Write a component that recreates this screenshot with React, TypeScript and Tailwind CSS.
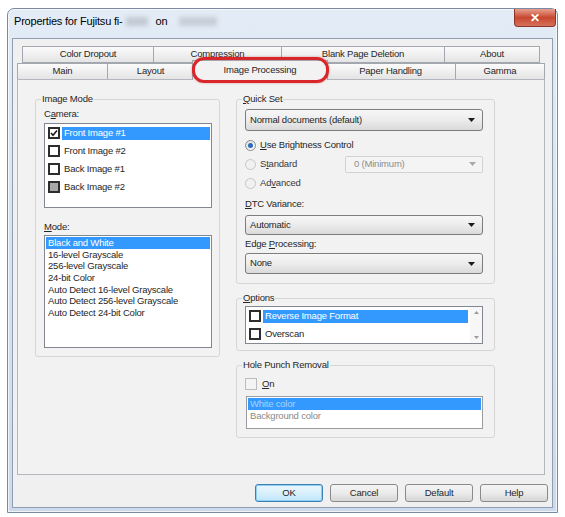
import React from 'react';

type BoxState = 'on' | 'off' | 'mixed' | 'disabled';

const Check = ({ state }: { state: BoxState }) => {
  if (state === 'disabled') {
    return <span className="w-[12px] h-[12px] shrink-0 border border-[#bcbcbc] bg-[#f4f4f4]" />;
  }
  return (
    <span className="w-[12px] h-[12px] shrink-0 border-2 border-[#2d2d2d] bg-white flex items-center justify-center">
      {state === 'on' && (
        <svg width="8" height="8" viewBox="0 0 8 8">
          <path d="M1 4 L3 6.2 L7 1.5" stroke="#1a1a1a" strokeWidth="1.6" fill="none" />
        </svg>
      )}
      {state === 'mixed' && <span className="w-[8px] h-[8px] bg-[#a8a8a8]" />}
    </span>
  );
};

const Radio = ({ on, disabled }: { on?: boolean; disabled?: boolean }) => (
  <span
    className={
      disabled
        ? 'w-[11px] h-[11px] shrink-0 rounded-full border border-[#c6c6c6] bg-[#f1f1f1]'
        : 'w-[11px] h-[11px] shrink-0 rounded-full border border-[#8b8b8b] bg-gradient-to-br from-[#dcdcdc] to-white flex items-center justify-center'
    }
  >
    {on && <span className="w-[5px] h-[5px] rounded-full bg-[#2c6bbf]" />}
  </span>
);

const Arrow = ({ light }: { light?: boolean }) => (
  <svg width="7" height="4" viewBox="0 0 7 4">
    <path d="M0 0 L7 0 L3.5 4 Z" fill={light ? '#a8a8a8' : '#1a1a1a'} />
  </svg>
);

const Dropdown = ({ text, h }: { text: string; h: string }) => (
  <div
    className={`${h} w-[238px] flex items-center justify-between pl-[4px] pr-[7px] rounded-[3px] border border-[#7d7d7d] bg-gradient-to-b from-[#f7f7f7] via-[#ececec] to-[#dadada]`}
  >
    <span>{text}</span>
    <Arrow />
  </div>
);

const Legend = ({ children }: { children: React.ReactNode }) => (
  <legend className="-ml-[3px] px-[1px] leading-[12px]">{children}</legend>
);

const Tab = ({ label, w, selected }: { label: string; w: string; selected?: boolean }) =>
  selected ? (
    <div
      className={`${w} relative z-10 -mx-[2px] -mt-[2px] h-[20px] flex items-center justify-center border border-b-0 border-[#a3a7ae] bg-[#f2f2f2]`}
    >
      <span className="-mt-[1px]">{label}</span>
      <div className="absolute -left-[1px] -right-[2px] -top-[4px] -bottom-[3px] rounded-[12px] border-[3px] border-[#d9262b] shadow-[0_0_2px_rgba(200,30,30,0.5)]" />
    </div>
  ) : (
    <div
      className={`${w} h-[17px] flex items-center justify-center border border-[#a3a7ae] -ml-px first:ml-0 bg-gradient-to-b from-[#fbfbfb] to-[#e4e4e4]`}
    >
      {label}
    </div>
  );

const Button = ({ label, primary }: { label: string; primary?: boolean }) => (
  <div
    className={
      primary
        ? 'w-[68px] h-[18px] flex items-center justify-center rounded-[3px] border border-[#3c7fb1] bg-gradient-to-b from-[#eaf6fd] via-[#d9f0fc] to-[#bee6fd] shadow-[inset_0_0_0_1px_#8ed0f5]'
        : 'w-[68px] h-[18px] flex items-center justify-center rounded-[3px] border border-[#8a8a8a] bg-gradient-to-b from-[#f4f4f4] via-[#ebebeb] to-[#d6d6d6]'
    }
  >
    {label}
  </div>
);

export default function App() {
  const modes = [
    '16-level Grayscale',
    '256-level Grayscale',
    '24-bit Color',
    'Auto Detect 16-level Grayscale',
    'Auto Detect 256-level Grayscale',
    'Auto Detect 24-bit Color',
  ];

  return (
    <div className="w-[565px] h-[517px] bg-white overflow-hidden pl-[7px] pt-[8px] font-['Liberation_Sans',Arial,sans-serif] text-[9.5px] tracking-[-0.2px] text-[#262626]">
      {/* window frame */}
      <div className="w-[551px] h-[505px] flex flex-col rounded-t-[7px] border border-[#7a8aa0] bg-gradient-to-b from-[#e3ecf6] via-[#d6e2ef] to-[#cddaea] px-[4px] pb-[4px] shadow-[inset_0_0_0_1px_rgba(255,255,255,0.7)]">
        <div className="h-[29px] flex items-start">
          <div className="mt-[5px] ml-[2px] flex items-center text-[11px] leading-[14px] text-black">
            <span>Properties for Fujitsu fi-</span>
            <span className="ml-[3px] w-[22px] h-[9px] bg-[#c3cad3] blur-[2px]" />
            <span className="ml-[8px]">on</span>
            <span className="ml-[12px] w-[38px] h-[9px] bg-[#c8ced7] blur-[2px]" />
          </div>
          <div className="ml-auto -mr-[3px] w-[42px] h-[18px] rounded-b-[4px] border border-t-0 border-[#8c3528] bg-gradient-to-b from-[#e6a090] via-[#c8472f] to-[#d6705a] flex items-center justify-center text-white text-[12px] font-bold leading-none">
            ✕
          </div>
        </div>

        {/* client area */}
        <div className="flex-1 flex flex-col border border-[#8f9eb2] bg-[#f0f0f0] px-[4px] pt-[7px]">
          <div className="flex ml-[5px]">
            <Tab label="Color Dropout" w="w-[132px]" />
            <Tab label="Compression" w="w-[129px]" />
            <Tab label="Blank Page Deletion" w="w-[164px]" />
            <Tab label="About" w="w-[96px]" />
          </div>
          <div className="flex -mt-px items-end">
            <Tab label="Main" w="w-[91px]" />
            <Tab label="Layout" w="w-[87px]" />
            <Tab label="Image Processing" w="w-[136px]" selected />
            <Tab label="Paper Handling" w="w-[131px]" />
            <Tab label="Gamma" w="w-[90px]" />
          </div>

          {/* tab page */}
          <div className="w-[528px] h-[396px] -mt-px border border-[#b4b7bd] bg-[#f2f2f2] flex gap-[16px] pl-[17px] pt-[13px]">
            <fieldset className="w-[185px] h-[264px] min-w-0 border border-[#d6d6d6] rounded-[3px] pl-[8px]">
              <Legend>Image Mode</Legend>
              <div className="mt-[3px] leading-[12px]">
                C<span className="underline">a</span>mera:
              </div>
              <div className="mt-[3px] w-[168px] h-[85px] border border-[#828790] bg-white">
                {[
                  ['Front Image #1', 'on'],
                  ['Front Image #2', 'off'],
                  ['Back Image #1', 'off'],
                  ['Back Image #2', 'mixed'],
                ].map(([label, st], i) => (
                  <div key={label} className="h-[18px] flex items-center pl-[3px]">
                    <Check state={st as BoxState} />
                    <span
                      className={
                        i === 0
                          ? 'ml-[2px] mr-[1px] flex-1 h-[13px] flex items-center px-[2px] bg-[#3399ff] text-white'
                          : 'ml-[2px] px-[2px]'
                      }
                    >
                      {label}
                    </span>
                  </div>
                ))}
              </div>
              <div className="mt-[13px] leading-[12px]">
                <span className="underline">M</span>ode:
              </div>
              <div className="mt-[2px] w-[168px] h-[113px] border border-[#828790] bg-white py-px px-px">
                <div className="h-[12px] flex items-center pl-[2px] bg-[#3399ff] text-white">Black and White</div>
                {modes.map((m) => (
                  <div key={m} className="h-[11.7px] flex items-center pl-[2px]">
                    {m}
                  </div>
                ))}
              </div>
            </fieldset>

            <div className="w-[259px] flex flex-col">
              <fieldset className="min-w-0 border border-[#d6d6d6] rounded-[3px] pl-[8px] pb-[9px]">
                <Legend>
                  <span className="underline">Q</span>uick Set
                </Legend>
                <div className="mt-[4px]">
                  <Dropdown text="Normal documents (default)" h="h-[22px]" />
                </div>
                <div className="mt-[7px] h-[14px] flex items-center gap-[4px]">
                  <Radio on />
                  <span>
                    <span className="underline">U</span>se Brightness Control
                  </span>
                </div>
                <div className="mt-[3px] w-[238px] h-[18px] flex items-center gap-[4px]">
                  <Radio disabled />
                  <span className="text-[#3a3a3a]">
                    S<span className="underline">t</span>andard
                  </span>
                  <div className="ml-auto w-[138px] h-[17px] flex items-center justify-between pl-[8px] pr-[6px] rounded-[2px] border border-[#d2d2d2] bg-[#f4f4f4] text-[#8d8d8d]">
                    <span>0 (Minimum)</span>
                    <Arrow light />
                  </div>
                </div>
                <div className="mt-[3px] h-[14px] flex items-center gap-[4px]">
                  <Radio disabled />
                  <span className="text-[#3a3a3a]">
                    Ad<span className="underline">v</span>anced
                  </span>
                </div>
                <div className="mt-[8px] leading-[12px]">
                  <span className="underline">D</span>TC Variance:
                </div>
                <div className="mt-[5px]">
                  <Dropdown text="Automatic" h="h-[20px]" />
                </div>
                <div className="mt-[3px] leading-[12px]">
                  Edge <span className="underline">P</span>rocessing:
                </div>
                <div className="mt-[3px]">
                  <Dropdown text="None" h="h-[21px]" />
                </div>
              </fieldset>

              <fieldset className="mt-[8px] min-w-0 border border-[#d6d6d6] rounded-[3px] pl-[8px] pb-[6px]">
                <Legend>
                  <span className="underline">O</span>ptions
                </Legend>
                <div className="mt-[2px] w-[238px] h-[38px] border border-[#828790] bg-white flex">
                  <div className="flex-1 flex flex-col">
                    <div className="h-[18px] flex items-center pl-[3px]">
                      <Check state="off" />
                      <span className="ml-[2px] mr-[2px] flex-1 h-[13px] flex items-center px-[2px] bg-[#3399ff] text-white">
                        Reverse Image Format
                      </span>
                    </div>
                    <div className="h-[18px] flex items-center pl-[3px]">
                      <Check state="off" />
                      <span className="ml-[2px] px-[2px]">Overscan</span>
                    </div>
                  </div>
                  <div className="w-[12px] flex flex-col items-center justify-between py-[4px] bg-[#f7f7f7]">
                    <svg width="5" height="3" viewBox="0 0 5 3">
                      <path d="M0 3 L5 3 L2.5 0 Z" fill="#9a9a9a" />
                    </svg>
                    <svg width="5" height="3" viewBox="0 0 5 3">
                      <path d="M0 0 L5 0 L2.5 3 Z" fill="#9a9a9a" />
                    </svg>
                  </div>
                </div>
              </fieldset>

              <fieldset className="mt-[8px] min-w-0 border border-[#d6d6d6] rounded-[3px] pl-[8px] pb-[8px]">
                <Legend>Hole Punch Removal</Legend>
                <div className="mt-[7px] h-[12px] flex items-center gap-[5px]">
                  <Check state="disabled" />
                  <span>
                    <span className="underline">O</span>n
                  </span>
                </div>
                <div className="mt-[6px] ml-px w-[237px] h-[33px] border border-[#9a9ca2] bg-white py-px px-px">
                  <div className="h-[12px] flex items-center pl-[2px] bg-[#3399ff] text-[#a9d2ff]">White color</div>
                  <div className="h-[12px] flex items-center pl-[2px] text-[#8a8a8a]">Background color</div>
                </div>
              </fieldset>
            </div>
          </div>

          {/* dialog buttons */}
          <div className="mt-[9px] flex justify-end gap-[7px]">
            <Button label="OK" primary />
            <Button label="Cancel" />
            <Button label="Default" />
            <Button label="Help" />
          </div>
        </div>
      </div>
    </div>
  );
}
